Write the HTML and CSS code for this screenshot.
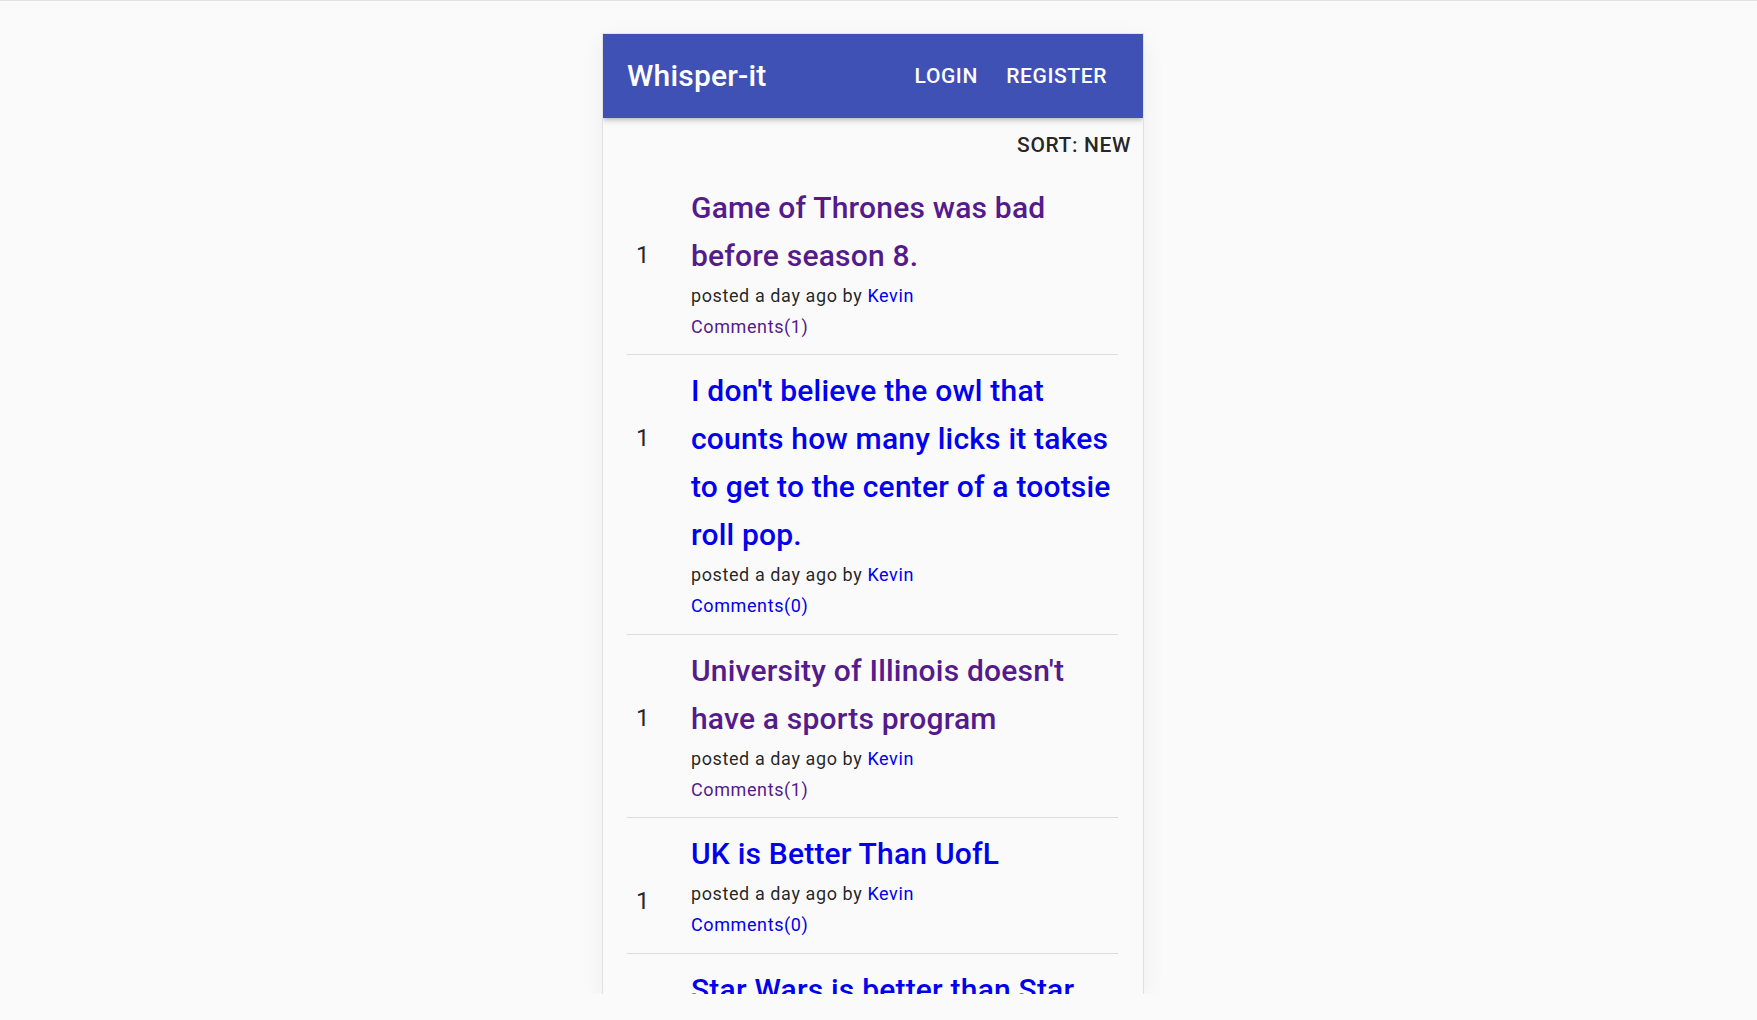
FILE: index.html
```html
<!DOCTYPE html>
<html lang="en">
<head>
<meta charset="utf-8">
<title>Whisper-it</title>
<link rel="stylesheet" href="styles.css">
</head>
<body class="page">
<div class="topline"></div>
<div class="stage">
  <div class="card">
    <header class="appbar">
      <div class="brand">Whisper-it</div>
      <nav class="nav">
        <a class="nav-btn nav-login" href="#">Login</a>
        <a class="nav-btn" href="#">Register</a>
      </nav>
    </header>
    <div class="scroller">
      <div class="sort-row"><button class="sort-btn">Sort: New</button></div>
      <ul class="posts">
        <li class="post">
          <div class="score">1</div>
          <div class="body">
            <a class="title visited" href="#">Game of Thrones was bad before season 8.</a>
            <div class="meta">posted a day ago by <a class="author" href="#">Kevin</a></div>
            <a class="comments visited" href="#">Comments(1)</a>
          </div>
        </li>
        <li class="post">
          <div class="score">1</div>
          <div class="body">
            <a class="title" href="#">I don't believe the owl that counts how many licks it takes to get to the center of a tootsie roll pop.</a>
            <div class="meta">posted a day ago by <a class="author" href="#">Kevin</a></div>
            <a class="comments" href="#">Comments(0)</a>
          </div>
        </li>
        <li class="post">
          <div class="score">1</div>
          <div class="body">
            <a class="title visited" href="#">University of Illinois doesn't have a sports program</a>
            <div class="meta">posted a day ago by <a class="author" href="#">Kevin</a></div>
            <a class="comments visited" href="#">Comments(1)</a>
          </div>
        </li>
        <li class="post">
          <div class="score">1</div>
          <div class="body">
            <a class="title" href="#">UK is Better Than UofL</a>
            <div class="meta">posted a day ago by <a class="author" href="#">Kevin</a></div>
            <a class="comments" href="#">Comments(0)</a>
          </div>
        </li>
        <li class="post">
          <div class="score">1</div>
          <div class="body">
            <a class="title" href="#">Star Wars is better than Star Trek</a>
            <div class="meta">posted a day ago by <a class="author" href="#">Kevin</a></div>
            <a class="comments" href="#">Comments(0)</a>
          </div>
        </li>
      </ul>
    </div>
  </div>
</div>
</body>
</html>
```

FILE: styles.css
```css
* { box-sizing: border-box; }

.page {
  margin: 0;
  background: #fafafa;
  font-family: Roboto, "Liberation Sans", Arial, sans-serif;
  color: rgba(0, 0, 0, 0.87);
}

.topline {
  height: 1px;
  background: #e2e2e2;
}

.stage {
  display: flex;
  justify-content: center;
  padding: 33px 11px 0 0;
}

.card {
  width: 540px;
  height: 960px;
  display: flex;
  flex-direction: column;
  overflow: hidden;
  background: #fafafa;
  box-shadow: 0 0 0 1px rgba(0, 0, 0, 0.08), 0 6px 24px rgba(0, 0, 0, 0.06);
}

.appbar {
  flex: none;
  height: 84px;
  display: flex;
  align-items: center;
  justify-content: space-between;
  padding: 0 24px;
  background: #3f51b5;
  color: #fff;
  box-shadow: 0 2px 4px -1px rgba(0, 0, 0, 0.2), 0 4px 5px 0 rgba(0, 0, 0, 0.1);
  position: relative;
  z-index: 2;
}

.brand {
  font-size: 30px;
  font-weight: 500;
  letter-spacing: 0.2px;
  line-height: 48px;
}

.nav {
  display: flex;
}

.nav-btn {
  color: #fff;
  text-decoration: none;
  text-transform: uppercase;
  font-size: 21px;
  font-weight: 500;
  letter-spacing: 0.6px;
  line-height: 36px;
  padding: 9px 12px;
  min-width: 96px;
  text-align: center;
}

.scroller {
  flex: 1;
  overflow: hidden;
}

.sort-row {
  display: flex;
  justify-content: flex-end;
  height: 54px;
}

.sort-btn {
  border: 0;
  background: transparent;
  font-family: inherit;
  color: rgba(0, 0, 0, 0.87);
  text-transform: uppercase;
  font-size: 21px;
  font-weight: 500;
  letter-spacing: 0.6px;
  line-height: 36px;
  padding: 9px 12px;
}

.posts {
  list-style: none;
  margin: 0;
  padding: 0;
}

.post {
  display: flex;
  margin: 0 25px 0 24px;
  padding: 12px 0;
  border-bottom: 1px solid #dcdcdc;
}

.score {
  flex: none;
  width: 64px;
  padding-left: 9px;
  margin-top: 53px;
  font-size: 24px;
  line-height: 36px;
  letter-spacing: 0.2px;
}

.body {
  flex: 1;
  min-width: 0;
}

.title {
  display: block;
  font-size: 30px;
  font-weight: 500;
  line-height: 48px;
  letter-spacing: 0.2px;
  color: #0000ee;
  text-decoration: none;
}

.title.visited {
  color: #551a8b;
}

.meta {
  margin-top: 1px;
}

.meta,
.comments {
  display: block;
  font-size: 18px;
  line-height: 30.7px;
  letter-spacing: 0.6px;
}

.author,
.comments {
  color: #0000ee;
  text-decoration: none;
}

.comments.visited {
  color: #551a8b;
}
```
